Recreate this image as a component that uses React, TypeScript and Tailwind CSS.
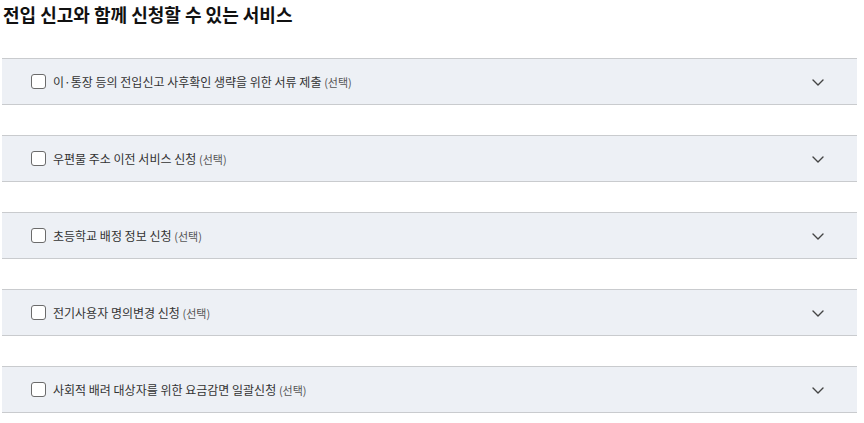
import React from "react";

const items = [
  "이·통장 등의 전입신고 사후확인 생략을 위한 서류 제출",
  "우편물 주소 이전 서비스 신청",
  "초등학교 배정 정보 신청",
  "전기사용자 명의변경 신청",
  "사회적 배려 대상자를 위한 요금감면 일괄신청",
];

export default function App() {
  return (
    <div
      className="w-[864px] h-[423px] bg-white overflow-hidden"
      style={{ fontFamily: '"Noto Sans CJK KR", "Noto Sans", sans-serif' }}
    >
      <h2 className="pl-[3px] pt-[1px] text-[18px] leading-[27px] font-bold text-[#111]">
        전입 신고와 함께 신청할 수 있는 서비스
      </h2>
      <div className="mt-[30px] ml-[2px] w-[855px] flex flex-col gap-[30px]">
        {items.map((t) => (
          <div
            key={t}
            className="h-[47px] bg-[#edf0f5] border-t border-b border-[#c9cbce] flex items-center pl-[29px] pr-[32px]"
          >
            <span className="w-[15px] h-[15px] rounded-[3px] border-[1.5px] border-[#6b6b6b] bg-white shrink-0" />
            <span className="ml-[7px] text-[12px] text-[#333]">
              {t} <span className="text-[11px] text-[#555]">(선택)</span>
            </span>
            <svg className="ml-auto" width="14" height="14" viewBox="0 0 14 14" fill="none">
              <path d="M2 5l5 5 5-5" stroke="#444" strokeWidth="1.4" strokeLinecap="round" strokeLinejoin="round" />
            </svg>
          </div>
        ))}
      </div>
    </div>
  );
}
